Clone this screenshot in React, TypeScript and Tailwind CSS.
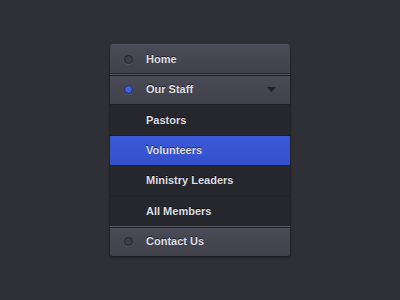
import React from 'react';

type Item = { label: string; kind: 'top' | 'sub'; h: string; active?: boolean; open?: boolean; selected?: boolean };

const items: Item[] = [
  { label: 'Home', kind: 'top', h: 'h-[30px]' },
  { label: 'Our Staff', kind: 'top', h: 'h-[30px]', active: true, open: true },
  { label: 'Pastors', kind: 'sub', h: 'h-[31px]' },
  { label: 'Volunteers', kind: 'sub', h: 'h-[30px]', selected: true },
  { label: 'Ministry Leaders', kind: 'sub', h: 'h-[30px]' },
  { label: 'All Members', kind: 'sub', h: 'h-[31px]' },
  { label: 'Contact Us', kind: 'top', h: 'h-[30px]' },
];

const Dot = ({ active }: { active?: boolean }) => (
  <span
    className={`w-[9px] h-[9px] rounded-full border ${
      active
        ? 'bg-[#3d63e0] border-[#1d2a5a] shadow-[0_1px_0_rgba(255,255,255,0.08)]'
        : 'bg-[#3c3d45] border-[#25262b] shadow-[0_1px_0_rgba(255,255,255,0.08)]'
    }`}
  />
);

export default function App() {
  return (
    <div className="w-[400px] h-[300px] bg-[#2f3035] flex justify-center pt-[44px] font-['Liberation_Sans',Arial,sans-serif]">
      <div className="w-[180px] h-[212px] rounded-[3px] overflow-hidden flex flex-col shadow-[0_1px_3px_rgba(0,0,0,0.6)] bg-[#25262b]">
        {items.map((it, i) => {
          if (it.kind === 'top') {
            return (
              <div
                key={it.label}
                className={`${it.h} shrink-0 flex items-center bg-gradient-to-b from-[#4a4b56] to-[#40414b] border-t border-t-[#55565f] ${
                  i > 0 ? 'shadow-[inset_0_1px_0_#1f2024]' : ''
                } ${i === 0 ? 'border-b border-b-[#24252a]' : ''}`}
              >
                <span className="w-[36px] flex justify-center pl-[1px]">
                  <Dot active={it.active} />
                </span>
                <span className="text-[11px] font-bold text-[#dedee3] [text-shadow:0_-1px_0_rgba(0,0,0,0.6)] flex-1">
                  {it.label}
                </span>
                {it.open && (
                  <svg width="9" height="5" viewBox="0 0 9 5" className="mr-[14px]">
                    <path d="M0 0H9L4.5 5Z" fill="#202126" />
                  </svg>
                )}
              </div>
            );
          }
          return (
            <div
              key={it.label}
              className={`${it.h} shrink-0 flex items-center pl-[36px] border-t ${
                it.selected
                  ? 'bg-gradient-to-b from-[#3c5ad8] to-[#3450cc] border-t-[#1c1d22]'
                  : 'bg-[#26272c] border-t-[#1e1f23]'
              }`}
            >
              <span className="text-[11px] font-bold text-[#dedee3] [text-shadow:0_-1px_0_rgba(0,0,0,0.6)]">
                {it.label}
              </span>
            </div>
          );
        })}
      </div>
    </div>
  );
}
